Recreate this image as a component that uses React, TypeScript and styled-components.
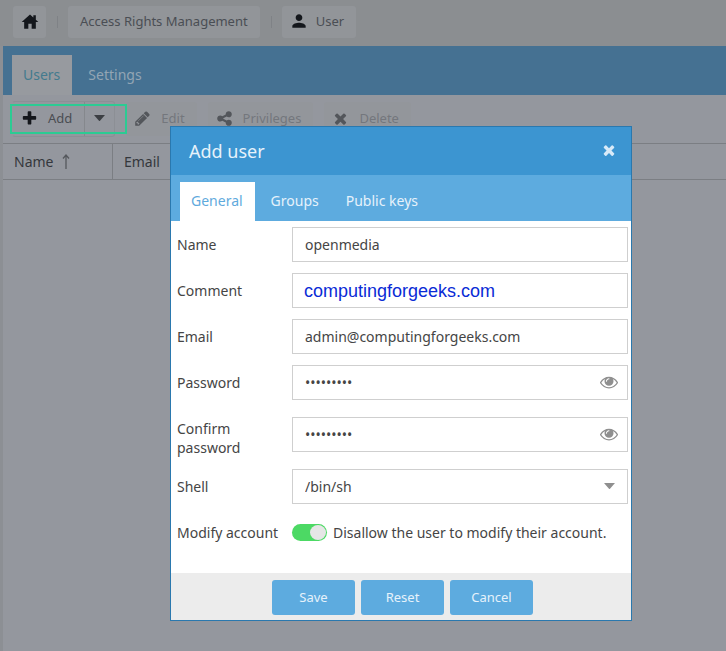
import React from 'react';
import styled, { createGlobalStyle } from 'styled-components';

const GlobalStyle = createGlobalStyle`
  * { box-sizing: border-box; }
  body {
    margin: 0;
    background: #94979e;
    color: #454545;
    font-family: "Noto Sans", "Open Sans", sans-serif;
    font-size: 14px;
    line-height: 19px;
  }
  button, input, select { font: inherit; color: inherit; }
  button { cursor: pointer; }
`;

const Page = styled.div`
  position: relative;
  min-height: 100vh;
  padding-left: 3px;
  background: linear-gradient(to right, #8c8f94 3px, #94979e 3px);
`;

const TopBar = styled.nav`
  display: flex;
  align-items: center;
  gap: 11px;
  height: 46px;
  margin-left: -3px;
  padding: 0 13px 2px;
  background: #8b8e91;
`;

const Crumb = styled.button<{ $square?: boolean }>`
  display: flex;
  align-items: center;
  justify-content: center;
  gap: 7px;
  height: 32px;
  width: ${(p) => (p.$square ? '33px' : 'auto')};
  padding: 0 ${(p) => (p.$square ? '0' : '12px 2px')};
  border: 0;
  border-radius: 3px;
  background: #929599;
  color: #4a4e54;
  font-size: 13px;
  svg { color: #14171c; }
`;

const CrumbIcon = styled.span`
  display: flex;
  margin-left: -5px;
`;

const Divider = styled.span`
  width: 1px;
  height: 12px;
  margin-right: -1px;
  background: #7f8286;
`;

const TabStrip = styled.div<{ $dim?: boolean }>`
  display: flex;
  align-items: flex-end;
  gap: 5px;
  height: ${(p) => (p.$dim ? '49px' : '46px')};
  padding: 0 9px;
  background: ${(p) => (p.$dim ? '#457192' : '#5dabdf')};
`;

const Tab = styled.button<{ $dim?: boolean; $active?: boolean }>`
  height: ${(p) => (p.$dim ? '40px' : '39px')};
  padding: 0 ${(p) => (p.$active ? '12px' : '11px')} 2px 11px;
  border: 0;
  background: ${(p) => (p.$active ? (p.$dim ? '#979a9f' : '#ffffff') : 'transparent')};
  color: ${(p) =>
    p.$dim ? (p.$active ? '#437a8e' : '#93a5b4') : p.$active ? '#5faadd' : '#e6f2fb'};
`;

const Toolbar = styled.div`
  display: flex;
  align-items: center;
  gap: 11px;
  height: 48px;
  padding: 0 9px 1px;
`;

const SplitButton = styled.div`
  position: relative;
  display: flex;
  height: 36px;
  border: 1px solid #8c8f95;
  border-left-color: transparent;
  border-radius: 3px;
`;

const ToolButton = styled.button<{ $enabled?: boolean }>`
  display: flex;
  align-items: center;
  gap: 10px;
  height: 34px;
  padding: 0 12px 0 8px;
  border: 0;
  border-radius: 3px;
  background: ${(p) => (p.$enabled ? 'transparent' : '#93969b')};
  color: ${(p) => (p.$enabled ? '#4a4d52' : '#74777d')};
  font-size: 13px;
  svg { color: ${(p) => (p.$enabled ? '#14171c' : '#53565b')}; }
`;

const SplitArrow = styled.button`
  display: flex;
  align-items: center;
  justify-content: center;
  width: 30px;
  padding: 0;
  border: 0;
  border-left: 1px solid #85888d;
  background: transparent;
  color: #3c3f44;
`;

const Highlight = styled.span`
  position: absolute;
  inset: 2px -13px 2px -3px;
  border: 2px solid #2ccb93;
  pointer-events: none;
`;

const Grid = styled.table`
  width: 100%;
  border-collapse: separate;
  border-spacing: 0;
  table-layout: fixed;
`;

const HeadCell = styled.th<{ $narrow?: boolean }>`
  width: ${(p) => (p.$narrow ? '110px' : 'auto')};
  height: 37px;
  padding: 0 11px;
  border: solid #7b7e83;
  border-width: 1px ${(p) => (p.$narrow ? '1px' : '0')} 1px 0;
  color: #34373c;
  font-weight: 400;
  text-align: left;
  svg { margin-left: 9px; vertical-align: -2px; color: #55585d; }
`;

const Overlay = styled.div`
  position: absolute;
  inset: 0;
  display: flex;
  align-items: flex-start;
  justify-content: center;
  padding: 126px 0 0 76px;
`;

const Dialog = styled.section`
  width: 462px;
  max-width: 100%;
  border: 1px solid #2a78ae;
  background: #ffffff;
`;

const DialogHeader = styled.header`
  display: flex;
  align-items: center;
  justify-content: space-between;
  height: 48px;
  padding: 0 14px 0 18px;
  background: #3c95d1;
  color: #e6f2fb;
`;

const DialogTitle = styled.h1`
  margin: 0;
  font-size: 18px;
  line-height: 24px;
  font-weight: 400;
`;

const CloseButton = styled.button`
  display: flex;
  padding: 0 0 2px;
  border: 0;
  background: transparent;
  color: #d8eaf8;
`;

const Form = styled.div`
  display: flex;
  flex-direction: column;
  gap: 11px;
  padding: 6px 3px 23px 6px;
`;

const Row = styled.div`
  display: grid;
  grid-template-columns: 115px 1fr;
  align-items: center;
  min-height: 35px;
`;

const Label = styled.label`
  align-self: start;
  padding: 8px 9px 1px 0;
`;

const Control = styled.div`
  position: relative;
  display: flex;
`;

const TextInput = styled.input<{ $accent?: boolean }>`
  width: 100%;
  height: 35px;
  padding: ${(p) => (p.$accent ? '2px' : '0')} ${(p) => (p.type === 'password' ? '36px' : '12px')} 0 ${(p) => (p.$accent ? '11px' : '12px')};
  border: 1px solid #cfcfcf;
  border-radius: 0;
  background: #ffffff;
  outline: none;
  color: ${(p) => (p.$accent ? '#0a2bd6' : '#454545')};
  font-family: ${(p) => (p.$accent ? '"Liberation Sans", Arial, sans-serif' : 'inherit')};
  font-size: ${(p) => (p.$accent ? '18px' : '14px')};
`;

const SelectInput = styled.select`
  width: 100%;
  height: 35px;
  padding: 0 36px 0 12px;
  border: 1px solid #cfcfcf;
  border-radius: 0;
  background: #ffffff;
  appearance: none;
  outline: none;
`;

const Reveal = styled.button`
  position: absolute;
  inset: 1px 1px 1px auto;
  display: flex;
  align-items: center;
  justify-content: center;
  width: 36px;
  padding: 0 0 2px;
  border: 0;
  background: transparent;
  color: #8f8f8f;
`;

const SelectArrow = styled.span`
  position: absolute;
  inset: 1px 1px 1px auto;
  display: flex;
  align-items: center;
  justify-content: center;
  width: 36px;
  color: #8f8f8f;
  pointer-events: none;
`;

const ToggleLabel = styled.label`
  display: flex;
  align-items: center;
  gap: 6px;
`;

const Toggle = styled.input`
  flex: none;
  display: flex;
  justify-content: flex-end;
  width: 35px;
  height: 17px;
  margin: 0;
  padding: 1px;
  border-radius: 9px;
  background: #4cd964;
  appearance: none;
  &::before {
    content: "";
    width: 16px;
    height: 15px;
    border-radius: 50%;
    background: #e6e6e6;
  }
  &:not(:checked) { justify-content: flex-start; background: #c4c4c4; }
`;

const Footer = styled.footer`
  display: flex;
  justify-content: center;
  gap: 6px;
  padding: 7px 0 5px 3px;
  background: #ececec;
`;

const ActionButton = styled.button`
  width: 83px;
  height: 35px;
  padding: 0;
  border: 0;
  border-radius: 3px;
  background: #5dabdf;
  color: #e6f2fb;
  font-size: 13px;
`;

const glyphs = {
  plus: 'M1600 736v192q0 40-28 68t-68 28h-416v416q0 40-28 68t-68 28h-192q-40 0-68-28t-28-68v-416h-416q-40 0-68-28t-28-68v-192q0-40 28-68t68-28h416v-416q0-40 28-68t68-28h192q40 0 68 28t28 68v416h416q40 0 68 28t28 68z',
  times: 'M1490 1322q0 40-28 68l-136 136q-28 28-68 28t-68-28l-294-294-294 294q-28 28-68 28t-68-28l-136-136q-28-28-28-68t28-68l294-294-294-294q-28-28-28-68t28-68l136-136q28-28 68-28t68 28l294 294 294-294q28-28 68-28t68 28l136 136q28 28 28 68t-28 68l-294 294 294 294q28 28 28 68z',
  eye: 'M1664 960q-152-236-381-353 61 104 61 225 0 185-131.5 316.5t-316.5 131.5-316.5-131.5-131.5-316.5q0-121 61-225-229 117-381 353 133 205 333.5 326.5t434.5 121.5 434.5-121.5 333.5-326.5zm-720-384q0-20-14-34t-34-14q-125 0-214.5 89.5t-89.5 214.5q0 20 14 34t34 14 34-14 14-34q0-86 61-147t147-61q20 0 34-14t14-34zm848 384q0 34-20 69-140 230-376.5 368.5t-499.5 138.5-499.5-139-376.5-368q-20-35-20-69t20-69q140-229 376.5-368t499.5-139 499.5 139 376.5 368q20 35 20 69z',
  pencil: 'M491 1536l91-91-235-235-91 91v107h128v128h107zm523-928q0-22-22-22-10 0-17 7l-542 542q-7 7-7 17 0 22 22 22 10 0 17-7l542-542q7-7 7-17zm-54-192l416 416-832 832h-416v-416zm683 96q0 53-37 90l-166 166-416-416 166-165q36-38 90-38 53 0 91 38l235 234q37 39 37 91z',
  share: 'M1344 1024q133 0 226.5 93.5t93.5 226.5-93.5 226.5-226.5 93.5-226.5-93.5-93.5-226.5q0-12 2-34l-360-180q-92 86-218 86-133 0-226.5-93.5t-93.5-226.5 93.5-226.5 226.5-93.5q126 0 218 86l360-180q-2-22-2-34 0-133 93.5-226.5t226.5-93.5 226.5 93.5 93.5 226.5-93.5 226.5-226.5 93.5q-126 0-218-86l-360 180q2 22 2 34t-2 34l360 180q92-86 218-86z',
};

function Glyph({ name, size }: { name: keyof typeof glyphs; size: number }) {
  return (
    <svg width={size} height={size} viewBox="0 0 1792 1792" fill="currentColor" aria-hidden="true">
      <path d={glyphs[name]} />
    </svg>
  );
}

function Caret() {
  return (
    <svg width="11" height="7" viewBox="0 0 11 7" fill="currentColor" aria-hidden="true">
      <path d="M0.8 0h9.4q.6 0 .4.6L6 5.8q-.5.5-1 0L.4.6Q.2 0 .8 0z" />
    </svg>
  );
}

function PasswordField({ id, label }: { id: string; label: string }) {
  const [visible, setVisible] = React.useState(false);
  return (
    <Row>
      <Label htmlFor={id}>{label}</Label>
      <Control>
        <TextInput id={id} type={visible ? 'text' : 'password'} defaultValue="openmedia" />
        <Reveal type="button" aria-label="Show password" onClick={() => setVisible(!visible)}>
          <Glyph name="eye" size={18} />
        </Reveal>
      </Control>
    </Row>
  );
}

export default function App() {
  return (
    <>
      <GlobalStyle />
      <Page>
        <TopBar>
          <Crumb $square aria-label="Home">
            <svg width="20" height="20" viewBox="0 0 24 24" fill="currentColor" aria-hidden="true">
              <path d="M19 9.3V4h-3v2.6L12 3 2 12h3v8h5v-6h4v6h5v-8h3l-3-2.7z" />
            </svg>
          </Crumb>
          <Divider />
          <Crumb>Access Rights Management</Crumb>
          <Divider />
          <Crumb>
            <CrumbIcon>
              <svg width="20" height="20" viewBox="0 0 24 24" fill="currentColor" aria-hidden="true">
                <path d="M12 12c2.21 0 4-1.79 4-4s-1.79-4-4-4-4 1.79-4 4 1.79 4 4 4zm0 2c-2.67 0-8 1.34-8 4v2h16v-2c0-2.66-5.33-4-8-4z" />
              </svg>
            </CrumbIcon>
            User
          </Crumb>
        </TopBar>
        <TabStrip $dim>
          <Tab $dim $active>Users</Tab>
          <Tab $dim>Settings</Tab>
        </TabStrip>
        <Toolbar>
          <SplitButton>
            <ToolButton $enabled>
              <Glyph name="plus" size={17} />
              Add
            </ToolButton>
            <SplitArrow aria-label="More add options">
              <Caret />
            </SplitArrow>
            <Highlight />
          </SplitButton>
          <ToolButton>
            <Glyph name="pencil" size={17} />
            Edit
          </ToolButton>
          <ToolButton>
            <Glyph name="share" size={17} />
            Privileges
          </ToolButton>
          <ToolButton>
            <Glyph name="times" size={17} />
            Delete
          </ToolButton>
        </Toolbar>
        <Grid>
          <thead>
            <tr>
              <HeadCell $narrow>
                Name
                <svg width="8" height="15" viewBox="0 0 8 15" fill="none" stroke="currentColor" aria-hidden="true">
                  <path d="M4 15V1.5M1 4.5l3-3.5 3 3.5" strokeWidth="1.3" />
                </svg>
              </HeadCell>
              <HeadCell>Email</HeadCell>
            </tr>
          </thead>
        </Grid>
        <Overlay>
          <Dialog role="dialog" aria-labelledby="dialog-title">
            <DialogHeader>
              <DialogTitle id="dialog-title">Add user</DialogTitle>
              <CloseButton aria-label="Close">
                <Glyph name="times" size={16} />
              </CloseButton>
            </DialogHeader>
            <TabStrip>
              <Tab $active>General</Tab>
              <Tab>Groups</Tab>
              <Tab>Public keys</Tab>
            </TabStrip>
            <Form>
              <Row>
                <Label htmlFor="name">Name</Label>
                <TextInput id="name" defaultValue="openmedia" />
              </Row>
              <Row>
                <Label htmlFor="comment">Comment</Label>
                <TextInput id="comment" $accent defaultValue="computingforgeeks.com" />
              </Row>
              <Row>
                <Label htmlFor="email">Email</Label>
                <TextInput id="email" defaultValue="admin@computingforgeeks.com" />
              </Row>
              <PasswordField id="password" label="Password" />
              <PasswordField id="confirm" label="Confirm password" />
              <Row>
                <Label htmlFor="shell">Shell</Label>
                <Control>
                  <SelectInput id="shell" defaultValue="/bin/sh">
                    <option>/bin/sh</option>
                  </SelectInput>
                  <SelectArrow>
                    <Caret />
                  </SelectArrow>
                </Control>
              </Row>
              <Row>
                <Label htmlFor="modify">Modify account</Label>
                <ToggleLabel>
                  <Toggle id="modify" type="checkbox" defaultChecked />
                  Disallow the user to modify their account.
                </ToggleLabel>
              </Row>
            </Form>
            <Footer>
              <ActionButton>Save</ActionButton>
              <ActionButton>Reset</ActionButton>
              <ActionButton>Cancel</ActionButton>
            </Footer>
          </Dialog>
        </Overlay>
      </Page>
    </>
  );
}
